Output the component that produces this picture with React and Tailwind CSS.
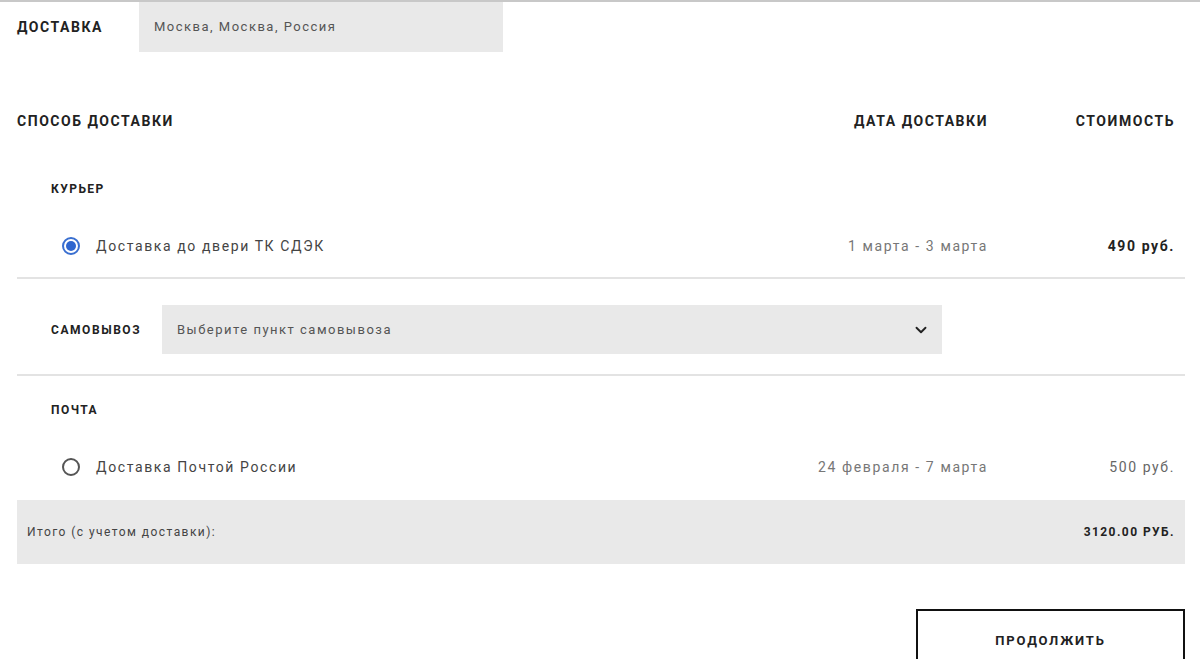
import { ChevronDown } from "lucide-react";

const font = { fontFamily: "Roboto, 'Liberation Sans', sans-serif" };

function Radio({ checked }) {
  return checked ? (
    <span className="flex h-[18px] w-[18px] items-center justify-center rounded-full border-2 border-[#3a6fd0]">
      <span className="h-[10px] w-[10px] rounded-full bg-[#2f66cf]" />
    </span>
  ) : (
    <span className="h-[18px] w-[18px] rounded-full border-2 border-[#555]" />
  );
}

function Option({ checked, label, date, price }) {
  return (
    <div className="flex h-[22px] items-center">
      <div className="flex flex-1 items-center pl-[45px]">
        <Radio checked={checked} />
        <span className="ml-[16px] text-[14px] tracking-[0.115em] text-[#444]">{label}</span>
      </div>
      <div className="text-right text-[14px] tracking-[0.115em] text-[#777]">{date}</div>
      <div
        className={`w-[197px] pr-[10px] text-right text-[14px] tracking-[0.115em] ${
          checked ? "font-bold text-[#222]" : "text-[#666]"
        }`}
      >
        {price}
      </div>
    </div>
  );
}

export default function App() {
  return (
    <div className="min-h-[659px] bg-white border-t-2 border-[#c8c8c8]" style={font}>
      <div className="ml-[17px] w-[1168px]">
        {/* Delivery city */}
        <div className="flex h-[50px] items-center">
          <div className="w-[122px] text-[14px] font-bold tracking-[0.11em] text-[#222]">ДОСТАВКА</div>
          <div className="flex h-[50px] w-[364px] items-center bg-[#e9e9e9] pl-[15px] text-[13px] tracking-[0.115em] text-[#555]">
            Москва, Москва, Россия
          </div>
        </div>

        {/* Header */}
        <div className="mt-[59px] flex h-[20px] items-center text-[14px] font-bold tracking-[0.11em] text-[#222]">
          <div className="flex-1">СПОСОБ ДОСТАВКИ</div>
          <div className="text-right">ДАТА ДОСТАВКИ</div>
          <div className="w-[197px] pr-[10px] text-right">СТОИМОСТЬ</div>
        </div>

        {/* Courier */}
        <div className="mt-[49px] pl-[34px] text-[12px] font-bold leading-[18px] tracking-[0.12em] text-[#222]">КУРЬЕР</div>
        <div className="mt-[37px]">
          <Option checked label="Доставка до двери ТК СДЭК" date="1 марта - 3 марта" price="490 руб." />
        </div>
        <div className="mt-[20px] h-[2px] bg-[#e3e3e3]" />

        {/* Pickup */}
        <div className="mt-[26px] flex items-center">
          <div className="w-[145px] pl-[34px] text-[12px] font-bold tracking-[0.13em] text-[#222]">САМОВЫВОЗ</div>
          <div className="flex h-[49px] w-[780px] items-center justify-between bg-[#e9e9e9] pl-[15px] pr-[12px]">
            <span className="text-[13px] tracking-[0.115em] text-[#555]">Выберите пункт самовывоза</span>
            <ChevronDown size={18} strokeWidth={2.5} className="text-[#222]" />
          </div>
        </div>
        <div className="mt-[20px] h-[2px] bg-[#e3e3e3]" />

        {/* Post */}
        <div className="mt-[25px] pl-[34px] text-[12px] font-bold leading-[18px] tracking-[0.12em] text-[#222]">ПОЧТА</div>
        <div className="mt-[37px]">
          <Option label="Доставка Почтой России" date="24 февраля - 7 марта" price="500 руб." />
        </div>

        {/* Total */}
        <div className="mt-[22px] flex h-[64px] items-center justify-between bg-[#e9e9e9] pl-[10px] pr-[10px]">
          <span className="text-[12px] tracking-[0.12em] text-[#444]">Итого (с учетом доставки):</span>
          <span className="text-[12px] font-bold tracking-[0.12em] text-[#222]">3120.00 РУБ.</span>
        </div>

        {/* Continue */}
        <div className="mt-[45px] flex justify-end">
          <button className="flex h-[62px] w-[269px] items-center justify-center border-2 border-[#111] pt-[2px] text-[13px] font-bold tracking-[0.14em] text-[#222]">
            ПРОДОЛЖИТЬ
          </button>
        </div>
      </div>
    </div>
  );
}
